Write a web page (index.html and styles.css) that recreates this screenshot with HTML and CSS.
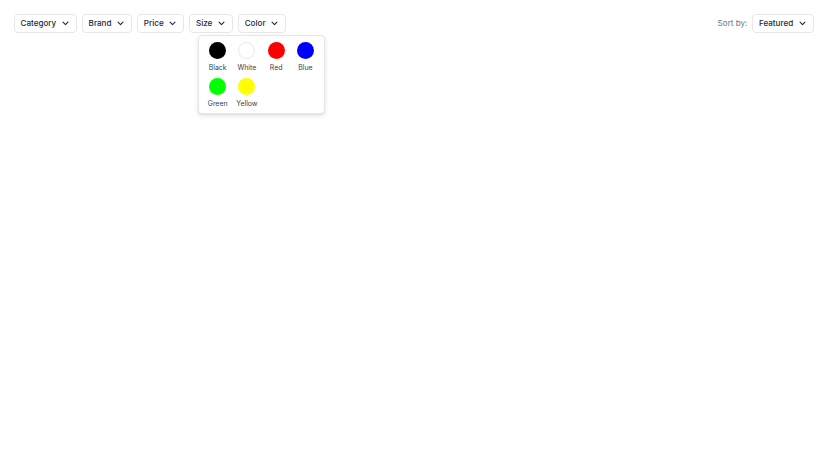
FILE: index.html
```html
<!DOCTYPE html>
<html lang="en">
<head>
<meta charset="utf-8">
<title>Filters</title>
<link rel="stylesheet" href="styles.css">
</head>
<body>
<div class="toolbar">
  <div class="filters">
    <button class="btn">Category<svg class="chev" viewBox="0 0 20 20"><path d="M5.5 7.5 10 12l4.5-4.5" /></svg></button>
    <button class="btn">Brand<svg class="chev" viewBox="0 0 20 20"><path d="M5.5 7.5 10 12l4.5-4.5" /></svg></button>
    <button class="btn">Price<svg class="chev" viewBox="0 0 20 20"><path d="M5.5 7.5 10 12l4.5-4.5" /></svg></button>
    <button class="btn">Size<svg class="chev" viewBox="0 0 20 20"><path d="M5.5 7.5 10 12l4.5-4.5" /></svg></button>
    <button class="btn">Color<svg class="chev" viewBox="0 0 20 20"><path d="M5.5 7.5 10 12l4.5-4.5" /></svg></button>
  </div>
  <div class="sort">
    <span class="sort-label">Sort by:</span>
    <button class="btn">Featured<svg class="chev" viewBox="0 0 20 20"><path d="M5.5 7.5 10 12l4.5-4.5" /></svg></button>
  </div>
</div>
<div class="dropdown">
  <div class="swatch"><span class="dot black"></span><span class="name">Black</span></div>
  <div class="swatch"><span class="dot white"></span><span class="name">White</span></div>
  <div class="swatch"><span class="dot red"></span><span class="name">Red</span></div>
  <div class="swatch"><span class="dot blue"></span><span class="name">Blue</span></div>
  <div class="swatch"><span class="dot green"></span><span class="name">Green</span></div>
  <div class="swatch"><span class="dot yellow"></span><span class="name">Yellow</span></div>
</div>
</body>
</html>
```
FILE: styles.css
```css
* { box-sizing: border-box; }
html, body { margin: 0; padding: 0; background: #fff; }
body {
  font-family: Inter, "Liberation Sans", sans-serif;
  color: #111827;
  width: 828px;
  height: 474px;
  position: relative;
}
.toolbar {
  display: flex;
  justify-content: space-between;
  align-items: center;
  padding: 14px 14px 0 14px;
}
.filters, .sort {
  display: flex;
  align-items: center;
  gap: 5px;
}
.btn {
  display: inline-flex;
  align-items: center;
  height: 18.5px;
  padding: 0 5.5px;
  border: 1px solid #e5e7eb;
  border-radius: 4px;
  background: #fff;
  font-family: inherit;
  font-size: 8.1px;
  font-weight: 500;
  color: #1f2937;
  line-height: 11px;
  cursor: pointer;
}
.chev {
  width: 11px;
  height: 11px;
  margin-left: 3.3px;
  fill: none;
  stroke: #1f2937;
  stroke-width: 2;
  stroke-linecap: round;
  stroke-linejoin: round;
}
.sort-label {
  font-size: 8.1px;
  color: #6b7280;
}
.dropdown {
  position: absolute;
  left: 198px;
  top: 35px;
  width: 127px;
  padding: 6px 7px 5px 7px;
  border: 1px solid #e5e7eb;
  border-radius: 4px;
  background: #fff;
  box-shadow: 0 2px 5px rgba(0,0,0,0.10), 0 1px 2px rgba(0,0,0,0.06);
  display: grid;
  grid-template-columns: repeat(4, 1fr);
  column-gap: 6px;
  row-gap: 6px;
}
.swatch {
  display: flex;
  flex-direction: column;
  align-items: center;
}
.dot {
  width: 17px;
  height: 17px;
  border-radius: 50%;
  display: block;
}
.black { background: #000; }
.white { background: #fff; border: 1px solid #e5e7eb; }
.red { background: #ff0000; }
.blue { background: #0000ff; }
.green { background: #00ff00; }
.yellow { background: #ffff00; }
.name {
  margin-top: 3.5px;
  font-size: 6.9px;
  line-height: 9.6px;
  color: #374151;
  white-space: nowrap;
}
```
